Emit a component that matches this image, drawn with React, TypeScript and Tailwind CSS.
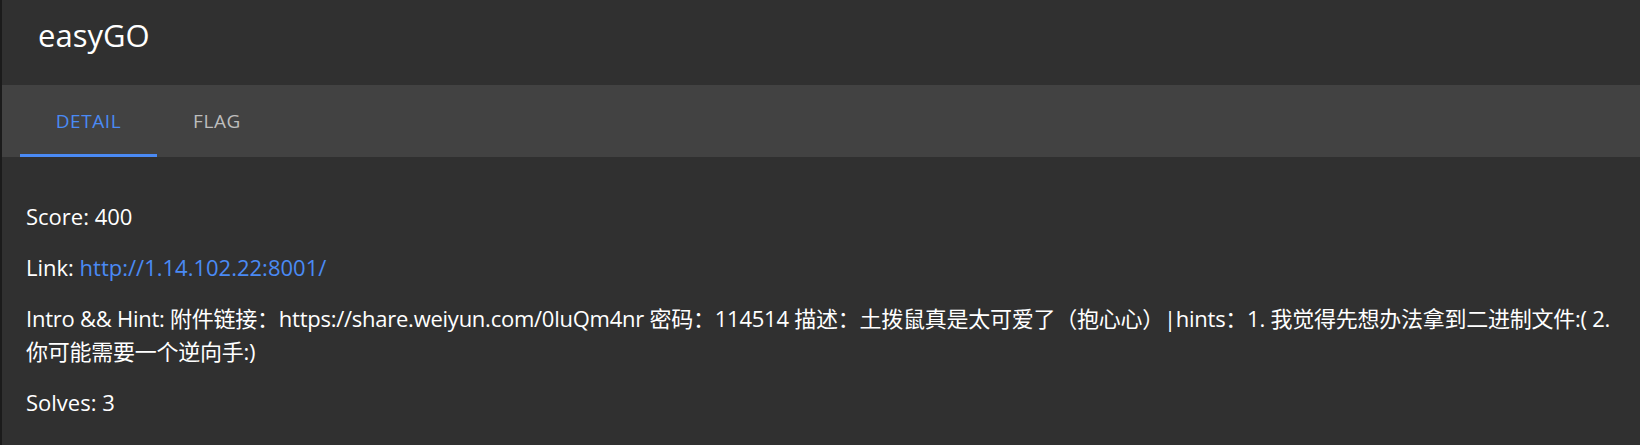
import React, { useState } from "react";

const tabs = ["Detail", "Flag"];

const App = () => {
  const [active, setActive] = useState(0);

  return (
    <div
      className="min-h-[445px] flex bg-[#303030] text-white"
      style={{ fontFamily: '"Open Sans", "Noto Sans CJK SC", sans-serif' }}
    >
      {/* thin dark strip on the left edge */}
      <div className="w-[2px] shrink-0 bg-[#1b1b1b]"></div>

      <div className="flex-1 flex flex-col">
        {/* Title bar */}
        <header className="h-[85px] pl-[36px] pt-[15px]">
          <h1 className="text-[31px] leading-[40px] font-normal text-white">easyGO</h1>
        </header>

        {/* Tabs */}
        <nav className="h-[72px] bg-[#424242] flex pl-[18px]">
          {tabs.map((tab, i) => (
            <button
              key={tab}
              onClick={() => setActive(i)}
              className={`relative h-full flex items-center justify-center uppercase text-[19px] tracking-[0.03em] ${
                i === 0 ? "w-[137px]" : "w-[120px]"
              } ${active === i ? "text-[#4a8af4]" : "text-[#bdbdbd]"}`}
            >
              {tab}
              {active === i && (
                <span className="absolute left-0 right-0 bottom-0 h-[3px] bg-[#4a8af4]"></span>
              )}
            </button>
          ))}
        </nav>

        {/* Detail content */}
        <main className="pt-[43px] pl-[24px] pr-[12px] text-[22px] leading-[33px]">
          <p className="mb-[18px]">Score: 400</p>
          <p className="mb-[18px]">
            Link: <a className="text-[#4a8af4]" href="#">http://1.14.102.22:8001/</a>
          </p>
          <p className="mb-[18px] tracking-[-0.25px]">
            Intro &amp;&amp; Hint: 附件链接：https://share.weiyun.com/0luQm4nr 密码：114514 描述：土拨鼠真是太可爱了（抱心心）|hints：1. 我觉得先想办法拿到二进制文件:( 2. 你可能需要一个逆向手:)
          </p>
          <p className="mb-[18px]">Solves: 3</p>
        </main>
      </div>
    </div>
  );
};

export default App;
